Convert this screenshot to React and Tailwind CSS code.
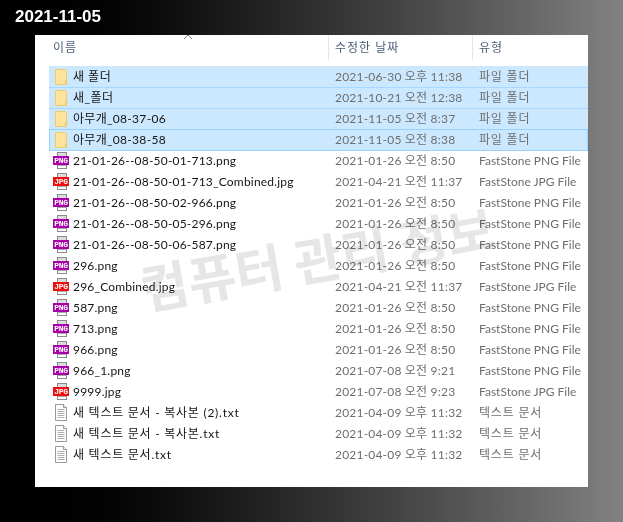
const font = { fontFamily: 'Lato, "Noto Sans CJK KR", sans-serif' };

const folders = [
  ["새 폴더", "2021-06-30 오후 11:38"],
  ["새_폴더", "2021-10-21 오전 12:38"],
  ["아무개_08-37-06", "2021-11-05 오전 8:37"],
  ["아무개_08-38-58", "2021-11-05 오전 8:38"],
];
const files = [
  ["png", "21-01-26--08-50-01-713.png", "2021-01-26 오전 8:50", "FastStone PNG File"],
  ["jpg", "21-01-26--08-50-01-713_Combined.jpg", "2021-04-21 오전 11:37", "FastStone JPG File"],
  ["png", "21-01-26--08-50-02-966.png", "2021-01-26 오전 8:50", "FastStone PNG File"],
  ["png", "21-01-26--08-50-05-296.png", "2021-01-26 오전 8:50", "FastStone PNG File"],
  ["png", "21-01-26--08-50-06-587.png", "2021-01-26 오전 8:50", "FastStone PNG File"],
  ["png", "296.png", "2021-01-26 오전 8:50", "FastStone PNG File"],
  ["jpg", "296_Combined.jpg", "2021-04-21 오전 11:37", "FastStone JPG File"],
  ["png", "587.png", "2021-01-26 오전 8:50", "FastStone PNG File"],
  ["png", "713.png", "2021-01-26 오전 8:50", "FastStone PNG File"],
  ["png", "966.png", "2021-01-26 오전 8:50", "FastStone PNG File"],
  ["png", "966_1.png", "2021-07-08 오전 9:21", "FastStone PNG File"],
  ["jpg", "9999.jpg", "2021-07-08 오전 9:23", "FastStone JPG File"],
  ["txt", "새 텍스트 문서 - 복사본 (2).txt", "2021-04-09 오후 11:32", "텍스트 문서"],
  ["txt", "새 텍스트 문서 - 복사본.txt", "2021-04-09 오후 11:32", "텍스트 문서"],
  ["txt", "새 텍스트 문서.txt", "2021-04-09 오후 11:32", "텍스트 문서"],
];

function FolderIcon() {
  return (
    <svg width="16" height="18" viewBox="0 0 16 18" className="block">
      <path d="M2.5 1.5h10l1 1v14h-11z" fill="#ffe39a" stroke="#eccb6e" />
      <path d="M12.5 16.5v-4h1v4z" fill="#ffedb8" stroke="#eccb6e" />
    </svg>
  );
}

function ImageIcon({ kind }) {
  const jpg = kind === "jpg";
  return (
    <span className="relative block w-4 h-[19px]">
      <svg width="16" height="19" viewBox="0 0 16 19" className="block">
        <rect x="4.5" y="1.5" width="9" height="16" fill="#fff" stroke="#8c8c8c" />
        <rect x="5" y="2" width="8" height="3" fill="#dcdcdc" />
        <path d="M5 14.5h8" stroke="#a8a8a8" />
      </svg>
      <span
        className={`absolute left-0 top-[5px] w-4 h-[9px] flex items-center justify-center text-white text-[8px] leading-none font-bold ${jpg ? "bg-[#f00d0d]" : "bg-[#a800a8]"}`}
        style={{ fontFamily: '"Liberation Mono", monospace', letterSpacing: "-0.3px" }}
      >
        {jpg ? "JPG" : "PNG"}
      </span>
    </span>
  );
}

function TextIcon() {
  return (
    <svg width="16" height="19" viewBox="0 0 16 19" className="block">
      <path d="M2.5 1.5h8l3 3v13h-11z" fill="#fff" stroke="#999" />
      <path d="M10.5 1.5v3h3" fill="#eee" stroke="#999" />
      <path d="M4.5 6.5h7M4.5 8.5h7M4.5 10.5h7M4.5 12.5h7M4.5 14.5h7" stroke="#b0b0b0" />
    </svg>
  );
}

function Row({ icon, name, date, type, rowClass, nameClass, typeClass }) {
  return (
    <div className={`flex items-center h-[21px] whitespace-nowrap ${rowClass}`}>
      <span className="w-[24px] pl-[4px] shrink-0 flex items-center">{icon}</span>
      <span className={`w-[262px] shrink-0 text-[#141414] ${nameClass}`}>{name}</span>
      <span className="w-[144px] shrink-0 text-[#6e6e6e] tracking-[0.2px]">{date}</span>
      <span className={`text-[#6e6e6e] ${typeClass}`}>{type}</span>
    </div>
  );
}

export default function App() {
  return (
    <div className="relative w-[623px] h-[522px] overflow-hidden bg-gradient-to-r from-black to-[#828282] pt-[35px] pl-[35px]" style={font}>
      <div
        className="absolute left-[15px] top-[7px] text-white text-[17px] leading-[20px] font-bold"
        style={{ fontFamily: '"Liberation Sans", sans-serif', textShadow: "0 0 2px #000" }}
      >
        2021-11-05
      </div>
      <div className="relative w-[553px] h-[452px] bg-white overflow-hidden text-[12px]">
        <div className="flex h-[25px] text-[#4c607a] tracking-[1px]">
          <div className="relative w-[294px] pl-[18px] pt-[4px] border-r border-[#e5e5e5]">
            이름
            <svg width="10" height="6" viewBox="0 0 10 6" className="absolute left-[148px] -top-[1px]">
              <path d="M1 5l4-4 4 4" fill="none" stroke="#8a8a8a" />
            </svg>
          </div>
          <div className="w-[144px] pl-[6px] pt-[4px] border-r border-[#e5e5e5]">수정한 날짜</div>
          <div className="pl-[6px] pt-[4px]">유형</div>
        </div>
        <div className="mt-[6px] ml-[14px]">
          {folders.map(([n, d], i) => (
            <Row
              key={n}
              icon={<FolderIcon />}
              name={n}
              date={d}
              type="파일 폴더"
              nameClass={i < 2 ? "tracking-[0.5px]" : "tracking-[0.3px]"}
              typeClass="tracking-[0.8px]"
              rowClass={
                i === 3
                  ? "bg-[#cce8ff] h-[22px] pb-[1px] shadow-[inset_0_0_0_1px_#99d1ff]"
                  : i === 0
                    ? "bg-[#cce8ff]"
                    : "bg-[#cce8ff] shadow-[inset_0_1px_0_#a8d8ff]"
              }
            />
          ))}
          <div className="-mt-[1px]">
            {files.map(([k, n, d, t]) => (
              <Row
                key={n}
                icon={k === "txt" ? <TextIcon /> : <ImageIcon kind={k} />}
                name={n}
                date={d}
                type={t}
                nameClass={k === "txt" ? "tracking-[0.75px]" : "tracking-[0.2px]"}
                typeClass={k === "txt" ? "tracking-[0.8px]" : ""}
                rowClass=""
              />
            ))}
          </div>
        </div>
        <div
          className="absolute left-[103px] top-[196px] text-[52px] leading-none font-bold text-[#e6e6e6] whitespace-nowrap -rotate-[10deg] pointer-events-none"
          style={{ mixBlendMode: "multiply", fontFamily: '"Noto Sans CJK KR", sans-serif' }}
        >
          컴퓨터 관리 정보
        </div>
      </div>
    </div>
  );
}
